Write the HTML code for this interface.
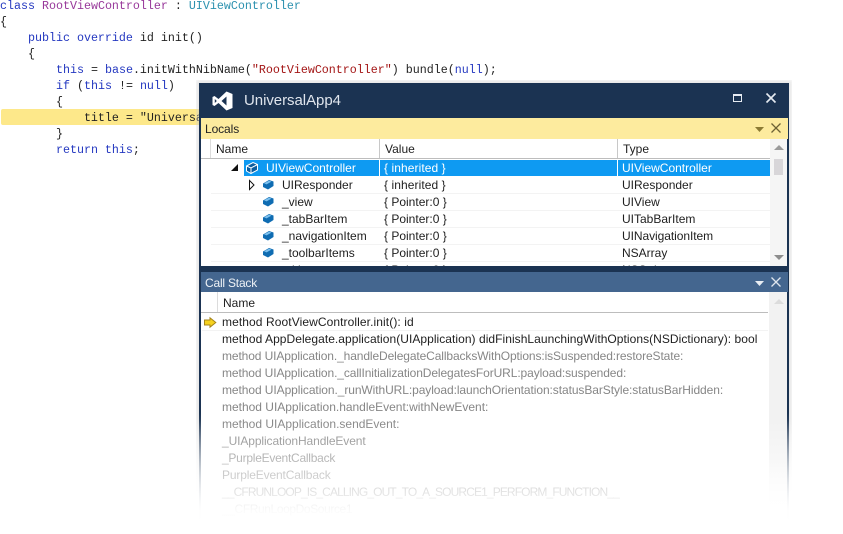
<!DOCTYPE html>
<html><head><meta charset="utf-8"><style>
html,body{margin:0;padding:0;background:#fff}
#r{position:relative;width:843px;height:534px;overflow:hidden;background:#fff;font-family:"Liberation Sans",sans-serif;font-size:12px;color:#1e1e1e}
#r div{position:absolute;white-space:pre}
.c{font-family:"Liberation Mono",monospace;font-size:11.67px;line-height:16px;left:0;color:#222}
.k{color:#2438c0}.t{color:#2b91af}.p{color:#98389a}.s{color:#a31515}
.w{line-height:16px;height:16px}
.m{left:222px}
.g{color:#868686}
.sep{height:1px;background:#f3f3f3}
svg{position:absolute;overflow:visible}
</style></head><body><div id="r">
<div style="left:1px;top:109px;width:230px;height:16px;background:#fde88a;border-radius:2px"></div>
<div class="c" style="top:-2px"><span class="k">class</span> <span class="p">RootViewController</span> : <span class="t">UIViewController</span></div>
<div class="c" style="top:14px">{</div>
<div class="c" style="top:30px">    <span class="k">public override</span> id init()</div>
<div class="c" style="top:46px">    {</div>
<div class="c" style="top:62px">        <span class="k">this</span> = <span class="k">base</span>.initWithNibName(<span class="s">"RootViewController"</span>) bundle(<span class="k">null</span>);</div>
<div class="c" style="top:78px">        <span class="k">if</span> (<span class="k">this</span> != <span class="k">null</span>)</div>
<div class="c" style="top:94px">        {</div>
<div class="c" style="top:110px">            title = "Universal</div>
<div class="c" style="top:126px">        }</div>
<div class="c" style="top:142px">        <span class="k">return this</span>;</div>

<div style="left:196px;top:80px;width:596px;height:450px;background:#cfcfcf;opacity:.5;filter:blur(2px);-webkit-mask-image:linear-gradient(#000 75%,transparent 93%)"></div>
<div style="left:199px;top:83px;width:590px;height:451px;background:#fff"></div>
<div style="left:199px;top:83px;width:590px;height:35px;background:#1b3352"></div>
<div style="left:199px;top:118px;width:2px;height:410px;background:linear-gradient(#1b3352 72%,transparent)"></div>
<div style="left:787px;top:118px;width:2px;height:410px;background:linear-gradient(#1b3352 72%,transparent)"></div>

<svg style="left:212px;top:91px" width="22" height="20" viewBox="0 0 22 20"><path fill="#fff" d="M14.5 0.5L20.5 3V17L14.5 19.5L6.5 12L2.5 15L0.5 14V6L2.5 5L6.5 8ZM14.5 5.5L9.5 10L14.5 14.5ZM2.8 8V12L4.8 10Z" fill-rule="evenodd"/></svg>
<div style="left:244px;top:91px;font-size:15px;line-height:20px;color:#dfe5ed;letter-spacing:-.05px">UniversalApp4</div>
<svg style="left:733px;top:93px" width="10" height="10" viewBox="0 0 10 10"><path fill="none" stroke="#e6ebf2" d="M.5 1.5H8.5V8.5H.5Z"/><path stroke="#e6ebf2" stroke-width="2" d="M0 2H9"/></svg>
<svg style="left:766px;top:93px" width="10" height="10" viewBox="0 0 10 10"><path stroke="#e6ebf2" stroke-width="1.6" d="M.5.5L9.5 9.5M9.5.5L.5 9.5"/></svg>

<div style="left:201px;top:118px;width:587px;height:21px;background:#fdeb9e"></div>
<div style="left:205px;top:122px;line-height:14px;color:#222;letter-spacing:-.1px">Locals</div>
<svg style="left:755px;top:127px" width="10" height="5"><path fill="#8c7b34" d="M0 0H9L4.5 5Z"/></svg>
<svg style="left:771px;top:123px" width="10" height="10" viewBox="0 0 10 10"><path stroke="#6d6235" stroke-width="1.3" d="M.5.5L9.5 9.5M9.5.5L.5 9.5"/></svg>

<div style="left:201px;top:139px;width:569px;height:19px;background:#fff;border-bottom:1px solid #bdbdbd"></div>
<div style="left:210px;top:139px;width:1px;height:19px;background:#dcdcdc"></div>
<div style="left:379px;top:139px;width:1px;height:19px;background:#c8c8c8"></div>
<div style="left:617px;top:139px;width:1px;height:19px;background:#c8c8c8"></div>
<div style="left:216px;top:142px;line-height:14px">Name</div>
<div style="left:385px;top:142px;line-height:14px">Value</div>
<div style="left:623px;top:142px;line-height:14px">Type</div>

<div style="left:244px;top:160px;width:526px;height:16px;background:#0e9af2"></div>
<div style="left:379px;top:160px;width:1px;height:16px;background:#fff"></div>
<div style="left:617px;top:160px;width:1px;height:16px;background:#fff"></div>
<svg style="left:231px;top:164px" width="8" height="8"><path d="M7 0V7H0Z" fill="#111"/></svg>
<svg style="left:245px;top:161px" width="14" height="14" viewBox="0 0 14 14"><path fill="#0c5d9e" stroke="#fff" d="M1.5 5L8 1.5L12.5 3.5V9L6 12.5L1.5 10Z"/><path fill="none" stroke="#fff" d="M1.5 5L6 7L12.5 3.5M6 7V12.5"/></svg>
<div class="w" style="left:266px;top:160px;color:#fff">UIViewController</div>
<div class="w" style="left:384px;top:160px;color:#fff;letter-spacing:.08px">{ inherited }</div>
<div class="w" style="left:622px;top:160px;color:#fff">UIViewController</div>

<svg style="left:249px;top:180px" width="6" height="10"><path d="M.5.5L5 5L.5 9.5Z" fill="#fff" stroke="#111"/></svg>
<div class="sep" style="left:211px;top:193px;width:559px"></div>
<div class="sep" style="left:211px;top:210px;width:559px"></div>
<div class="sep" style="left:211px;top:227px;width:559px"></div>
<div class="sep" style="left:211px;top:244px;width:559px"></div>
<div class="sep" style="left:211px;top:261px;width:559px"></div>

<svg style="left:263px;top:180px" width="11" height="10" viewBox="0 0 11 10"><path fill="#0f6cb2" d="M0 3.5L6 0L10.5 1.5V6L5 9.5L0 7Z"/><path fill="#7cc0ee" d="M1 3.3L6 .8L8.5 1.6L3.5 4.4Z"/></svg>
<svg style="left:263px;top:197px" width="11" height="10" viewBox="0 0 11 10"><path fill="#0f6cb2" d="M0 3.5L6 0L10.5 1.5V6L5 9.5L0 7Z"/><path fill="#7cc0ee" d="M1 3.3L6 .8L8.5 1.6L3.5 4.4Z"/></svg>
<svg style="left:263px;top:214px" width="11" height="10" viewBox="0 0 11 10"><path fill="#0f6cb2" d="M0 3.5L6 0L10.5 1.5V6L5 9.5L0 7Z"/><path fill="#7cc0ee" d="M1 3.3L6 .8L8.5 1.6L3.5 4.4Z"/></svg>
<svg style="left:263px;top:231px" width="11" height="10" viewBox="0 0 11 10"><path fill="#0f6cb2" d="M0 3.5L6 0L10.5 1.5V6L5 9.5L0 7Z"/><path fill="#7cc0ee" d="M1 3.3L6 .8L8.5 1.6L3.5 4.4Z"/></svg>
<svg style="left:263px;top:248px" width="11" height="10" viewBox="0 0 11 10"><path fill="#0f6cb2" d="M0 3.5L6 0L10.5 1.5V6L5 9.5L0 7Z"/><path fill="#7cc0ee" d="M1 3.3L6 .8L8.5 1.6L3.5 4.4Z"/></svg>

<div class="w" style="left:282px;top:177px">UIResponder</div><div class="w" style="left:384px;top:177px;letter-spacing:.08px">{ inherited }</div><div class="w" style="left:622px;top:177px">UIResponder</div>
<div class="w" style="left:282px;top:194px">_view</div><div class="w" style="left:384px;top:194px">{ Pointer:0 }</div><div class="w" style="left:622px;top:194px">UIView</div>
<div class="w" style="left:282px;top:211px">_tabBarItem</div><div class="w" style="left:384px;top:211px">{ Pointer:0 }</div><div class="w" style="left:622px;top:211px">UITabBarItem</div>
<div class="w" style="left:282px;top:228px">_navigationItem</div><div class="w" style="left:384px;top:228px">{ Pointer:0 }</div><div class="w" style="left:622px;top:228px;letter-spacing:-.06px">UINavigationItem</div>
<div class="w" style="left:282px;top:245px">_toolbarItems</div><div class="w" style="left:384px;top:245px">{ Pointer:0 }</div><div class="w" style="left:622px;top:245px">NSArray</div>
<div style="left:211px;top:262px;width:559px;height:4px;overflow:hidden"><div class="w" style="left:71px;top:0">_title</div><div class="w" style="left:173px;top:0">{ Pointer:0 }</div><div class="w" style="left:411px;top:0">NSString</div></div>

<div style="left:770px;top:139px;width:17px;height:127px;background:#f5f5f5"></div>
<svg style="left:774px;top:145px" width="10" height="5"><path fill="#9a9a9a" d="M0 5L5 0L10 5Z"/></svg>
<div style="left:774px;top:159px;width:9px;height:16px;background:#d8d6d9"></div>
<svg style="left:774px;top:255px" width="10" height="5"><path fill="#8d8d8d" d="M0 0H10L5 5Z"/></svg>

<div style="left:199px;top:266px;width:590px;height:6px;background:#1b3352"></div>
<div style="left:201px;top:272px;width:587px;height:20px;background:#44668f"></div>
<div style="left:205px;top:276px;line-height:14px;color:#eef2f6;letter-spacing:-.2px">Call Stack</div>
<svg style="left:755px;top:281px" width="10" height="5"><path fill="#e8edf3" d="M0 0H9L4.5 5Z"/></svg>
<svg style="left:771px;top:277px" width="10" height="10" viewBox="0 0 10 10"><path stroke="#dfe6ee" stroke-width="1.3" d="M.5.5L9.5 9.5M9.5.5L.5 9.5"/></svg>

<div style="left:201px;top:292px;width:567px;height:20px;border-bottom:1px solid #bdbdbd"></div>
<div style="left:217px;top:292px;width:1px;height:20px;background:#dcdcdc"></div>
<div style="left:223px;top:296px;line-height:14px">Name</div>
<div style="left:769px;top:292px;width:18px;height:242px;background:linear-gradient(#f2f2f2 70%,#fff 92%)"></div>
<svg style="left:774px;top:299px" width="10" height="5"><path fill="#dcdcdc" d="M0 5L5 0L10 5Z"/></svg>

<svg style="left:204px;top:317px" width="13" height="11" viewBox="0 0 13 11"><path fill="#f6d21f" stroke="#a5841a" d="M.5 3H6V.8L11.8 5.5L6 10.2V8H.5Z"/></svg>
<div class="w m" style="top:314px;letter-spacing:.09px">method RootViewController.init(): id</div>
<div class="w m" style="top:331px;letter-spacing:.047px">method AppDelegate.application(UIApplication) didFinishLaunchingWithOptions(NSDictionary): bool</div>
<div class="sep" style="left:202px;top:330px;width:566px"></div>
<div class="w m g" style="top:348px;letter-spacing:-.11px">method UIApplication._handleDelegateCallbacksWithOptions:isSuspended:restoreState:</div>
<div class="w m g" style="top:365px;letter-spacing:-.1px">method UIApplication._callInitializationDelegatesForURL:payload:suspended:</div>
<div class="w m g" style="top:382px;letter-spacing:-.08px">method UIApplication._runWithURL:payload:launchOrientation:statusBarStyle:statusBarHidden:</div>
<div class="w m g" style="top:399px;letter-spacing:-.01px">method UIApplication.handleEvent:withNewEvent:</div>
<div class="w m g" style="top:416px;letter-spacing:0">method UIApplication.sendEvent:</div>
<div class="w m g" style="top:433px;letter-spacing:-.1px">_UIApplicationHandleEvent</div>
<div class="w m g" style="top:450px;letter-spacing:-.25px">_PurpleEventCallback</div>
<div class="w m g" style="top:467px;letter-spacing:-.15px">PurpleEventCallback</div>
<div class="w m g" style="top:484px;letter-spacing:-.88px">__CFRUNLOOP_IS_CALLING_OUT_TO_A_SOURCE1_PERFORM_FUNCTION__</div>
<div class="w m g" style="top:501px;letter-spacing:-.4px">__CFRunLoopDoSource1</div>
<div style="left:190px;top:420px;width:620px;height:114px;background:linear-gradient(rgba(255,255,255,0),rgba(255,255,255,.97) 80%,#fff)"></div>
</div></body></html>
